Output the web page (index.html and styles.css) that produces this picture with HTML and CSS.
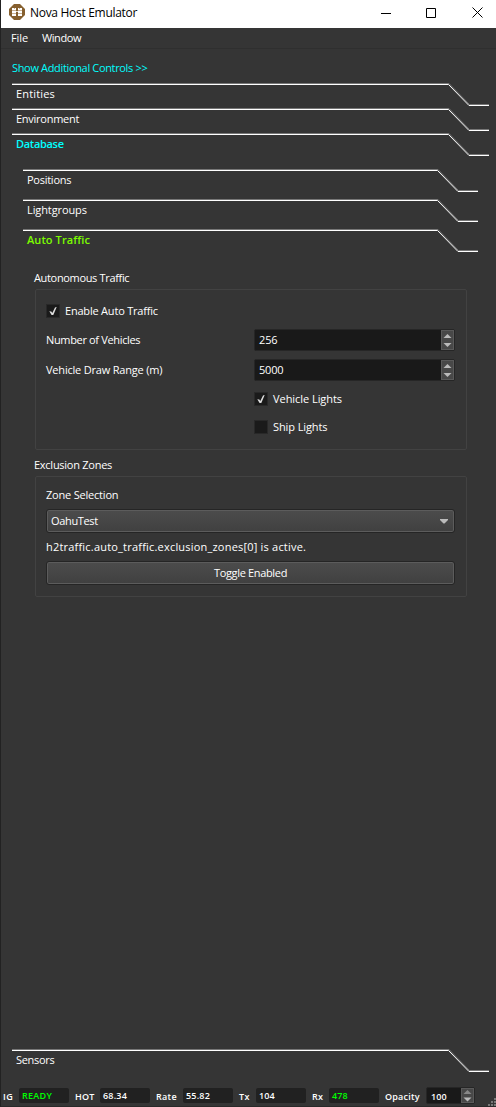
FILE: index.html
```html
<!DOCTYPE html>
<html lang="en">
<head>
<meta charset="utf-8">
<title>Nova Host Emulator</title>
<link rel="stylesheet" href="styles.css">
</head>
<body>
<svg class="defs" width="0" height="0">
  <symbol id="edge" viewBox="0 0 477 23"><path class="shade" d="M0 .5h437l20.500 21h19.500"/><path class="line" d="M0 1.500h436.500l20.500 21H477"/></symbol>
  <symbol id="edge-sub" viewBox="0 0 455 23"><path class="shade" d="M0 .5h415l20.500 21h19.500"/><path class="line" d="M0 1.500h414.500l20.500 21H455"/></symbol>
  <symbol id="tick" viewBox="0 0 14 14"><path d="M3.300 7.200l2 .2 1 1.600 2.700-5.600 1.700-.3-3.400 8h-1.700z" fill="#ddd"/></symbol>
  <symbol id="arrows" viewBox="0 0 13 20"><path d="M6.500 4l4 4h-8zM2.500 13h8l-4 4z" fill="#bbb"/></symbol>
</svg>
<div class="window">
  <header class="titlebar">
    <svg class="app-icon" width="16" height="16" viewBox="0 0 16 16"><path fill="#86602f" d="M5 0h6l5 5v6l-5 5H5l-5-5V5z"/><path fill="#fff" d="M3 4h4v8H3zM9 4h4v8H9z"/><path fill="#e8ddcf" d="M7 7h2v1H7z"/><path fill="#c9b497" d="M3 6h4v1H3zM9 6h4v1H9zM3 9h4v1H3zM9 9h4v1H9zM5 4h1v1H5zM10 4h1v1h-1z"/></svg>
    <h1><span class="t k-30">Nova Host Emulator</span></h1>
    <div class="win-buttons">
      <svg width="11" height="11" viewBox="0 0 11 11"><path d="M1 6.500h10" stroke="#000"/></svg>
      <svg width="11" height="11" viewBox="0 0 11 11"><path d="M.5 1.500h9v9h-9z" fill="none" stroke="#000"/></svg>
      <svg width="11" height="11" viewBox="0 0 11 11"><path d="M.5 .5l10 10M10.500 .5l-10 10" stroke="#000"/></svg>
    </div>
  </header>
  <nav class="menubar"><span class="t k-10">File</span><span class="t k-42">Window</span></nav>
  <main class="content">
    <a class="more"><span class="t k-34">Show Additional Controls &gt;&gt;</span></a>
    <section class="tab"><svg class="tab-line" width="477" height="23"><use href="#edge"/></svg><span class="t k17">Entities</span></section>
    <section class="tab"><svg class="tab-line" width="477" height="23"><use href="#edge"/></svg><span class="t k-26">Environment</span></section>
    <section class="tab database"><svg class="tab-line" width="477" height="23"><use href="#edge"/></svg><span class="t k-30">Database</span></section>
    <div class="database-body">
      <section class="tab sub"><svg class="tab-line" width="455" height="23"><use href="#edge-sub"/></svg><span class="t k-26">Positions</span></section>
      <section class="tab sub"><svg class="tab-line" width="455" height="23"><use href="#edge-sub"/></svg><span class="t k-10">Lightgroups</span></section>
      <section class="tab sub traffic"><svg class="tab-line" width="455" height="23"><use href="#edge-sub"/></svg><span class="t k08">Auto Traffic</span></section>
      <div class="panel">
        <h2><span class="t k-34">Autonomous Traffic</span></h2>
        <div class="group autonomous">
          <label class="check"><i class="box"><svg width="14" height="14"><use href="#tick"/></svg></i><span class="t k-20">Enable Auto Traffic</span></label>
          <div class="row"><span class="name"><span class="t k-34">Number of Vehicles</span></span><div class="spin"><span class="t k-12">256</span><i class="arrows"><svg width="13" height="20"><use href="#arrows"/></svg></i></div></div>
          <div class="row"><span class="name"><span class="t k-20">Vehicle Draw Range (m)</span></span><div class="spin"><span class="t k-20">5000</span><i class="arrows"><svg width="13" height="20"><use href="#arrows"/></svg></i></div></div>
          <label class="check right"><i class="box"><svg width="14" height="14"><use href="#tick"/></svg></i><span class="t k-05">Vehicle Lights</span></label>
          <label class="check right"><i class="box"></i><span class="t k-10">Ship Lights</span></label>
        </div>
        <h2 class="zones-title"><span class="t k-26">Exclusion Zones</span></h2>
        <div class="group zones">
          <p><span class="t k-20">Zone Selection</span></p>
          <div class="button combo"><span class="t k-34">OahuTest</span><svg width="8" height="5" viewBox="0 0 8 5"><path d="M0 0h8v1L4.500 4.500h-1L0 1z" fill="#bbb"/></svg></div>
          <p class="status"><span class="t k20">h2traffic.auto_traffic.exclusion_zones[0] is active.</span></p>
          <div class="button toggle"><span class="t k-34">Toggle Enabled</span></div>
        </div>
      </div>
    </div>
    <section class="tab sensors"><svg class="tab-line" width="477" height="23"><use href="#edge"/></svg><span class="t k-30">Sensors</span></section>
  </main>
  <footer class="statusbar">
    <span class="cell ig"><span class="t k50">IG</span></span><span class="field ok"><span class="t k30">READY</span></span>
    <span class="cell hot"><span class="t k20">HOT</span></span><span class="field"><span class="t k20">68.34</span></span>
    <span class="cell rate"><span class="t k30">Rate</span></span><span class="field"><span class="t k20">55.82</span></span>
    <span class="cell tx"><span class="t k50">Tx</span></span><span class="field"><span class="t k08">104</span></span>
    <span class="cell rx"><span class="t k20">Rx</span></span><span class="field ok"><span class="t k08">478</span></span>
    <span class="cell opacity"><span class="t k20">Opacity</span></span><div class="spin small"><span class="t k08">100</span><i class="arrows"><svg width="13" height="15" viewBox="0 0 13 15"><path d="M6.500 2l4 4h-8z" fill="#888"/><path d="M2.500 9.500h8l-4 4z" fill="#bbb"/></svg></i></div>
    <svg class="grip" width="8" height="8" viewBox="0 0 8 8"><path d="M6 0h2v2H6zM3 3h2v2H3zM6 3h2v2H6zM0 6h2v2H0zM3 6h2v2H3zM6 6h2v2H6z" fill="#777"/></svg>
  </footer>
</div>
</body>
</html>
```
FILE: styles.css
```css
* { box-sizing: border-box; }
body { margin: 0; background: #353535; color: #fff; font: 11px/14px "Open Sans", "Noto Sans", sans-serif; overflow: hidden; }
h1, h2, p { margin: 0; font: inherit; }
i { font-style: normal; }
svg { display: block; flex: none; }
.defs { position: absolute; }
.t { white-space: pre; }

/* letter tracking, in hundredths of a pixel */
.k-42 { letter-spacing: -.42px; }
.k-34 { letter-spacing: -.34px; }
.k-30 { letter-spacing: -.3px; }
.k-26 { letter-spacing: -.26px; }
.k-20 { letter-spacing: -.2px; }
.k-12 { letter-spacing: -.12px; }
.k-10 { letter-spacing: -.1px; }
.k-05 { letter-spacing: -.05px; }
.k08 { letter-spacing: .08px; }
.k17 { letter-spacing: .17px; }
.k20 { letter-spacing: .2px; }
.k30 { letter-spacing: .3px; }
.k50 { letter-spacing: .5px; }

.window { width: 496px; height: 1107px; display: flex; flex-direction: column; border-left: 1px solid #222; border-bottom: 1px solid #292929; }
.titlebar { height: 28px; flex: none; display: flex; align-items: center; padding: 0 13px 3px 8px; background: #fff; color: #000; font-size: 12px; }
.titlebar h1 { margin: 1px 0 0 5px; flex: 1; }
.app-icon { position: relative; top: -.5px; }
.win-buttons { display: flex; gap: 35px; }
.menubar { height: 21px; flex: none; display: flex; gap: 14px; padding: 3px 10px 0; border-bottom: 1px solid #2f2f2f; }
.content { flex: 1; display: flex; flex-direction: column; padding: 12px 6px 0 11px; }
.more { height: 22px; color: #00ffff; }
.tab { height: 25px; flex: none; display: grid; }
.tab > * { grid-area: 1 / 1; }
.tab > .t { padding: 4px 0 0 4px; }
.shade, .line { fill: none; }
.shade { stroke: #777; }
.line { stroke: #fff; }
.database > .t { color: #00ffff; font-weight: 600; }
.database-body { padding: 11px 0 0 11px; }
.sub { height: 30px; }
.traffic > .t { color: #7cfc00; font-weight: 600; }
.panel { padding: 12px 18px 0 11px; }
.panel h2 { height: 18px; }
.group { margin-left: 1px; width: 432px; border: 1px solid #424242; border-radius: 2px; padding: 0 11px 0 10px; }
.autonomous { height: 161px; padding-top: 14px; }
.check { display: flex; align-items: center; gap: 5px; height: 14px; margin-bottom: 11px; }
.box { width: 14px; height: 14px; background: #1a1a1a; border: 1px solid #282828; }
.box svg { margin: -1px; }
.row { display: flex; align-items: center; height: 22px; margin-bottom: 8px; }
.name { width: 208px; }
.spin { width: 201px; height: 22px; display: flex; align-items: center; justify-content: space-between; padding-left: 4px; background: #191919; border: 1px solid #262626; border-radius: 2px; }
.arrows { width: 13px; height: 20px; background: #484848; box-shadow: inset 0 0 0 1px #5a5a5a; }
.right { margin: 11px 0 14px 208px; }
.right + .right { margin-top: 0; }
.zones-title { margin-top: 8px; }
.zones { height: 121px; padding-top: 11px; }
.zones p { height: 21px; }
.button { height: 24px; width: 409px; background: linear-gradient(#4c4c4c, #404040); border: 1px solid #252525; border-radius: 3px; box-shadow: inset 0 0 0 1px #5c5c5c; display: flex; align-items: center; }
.combo { justify-content: space-between; padding: 0 6px 0 4px; }
.zones .status { height: 28px; padding-top: 7px; }
.toggle { justify-content: center; }
.sensors { margin-top: auto; height: 36px; }
.statusbar { height: 21px; flex: none; display: flex; align-items: center; font-size: 9px; font-weight: 600; position: relative; }
.cell { padding: 2px 0 0 6px; }
.ig { padding-left: 2px; width: 18px; }
.hot { width: 31px; }
.rate { width: 33px; }
.tx { width: 23px; }
.rx { width: 23px; }
.opacity { width: 47px; }
.field { width: 50px; height: 15px; padding: 1px 0 0 3px; background: #212121; border-radius: 2px; }
.ok { color: #00ff00; }
.small { width: 49px; height: 17px; }
.small .t { padding-top: 2px; }
.small .arrows { height: 15px; }
.grip { position: absolute; right: 0; bottom: 0; }
```
